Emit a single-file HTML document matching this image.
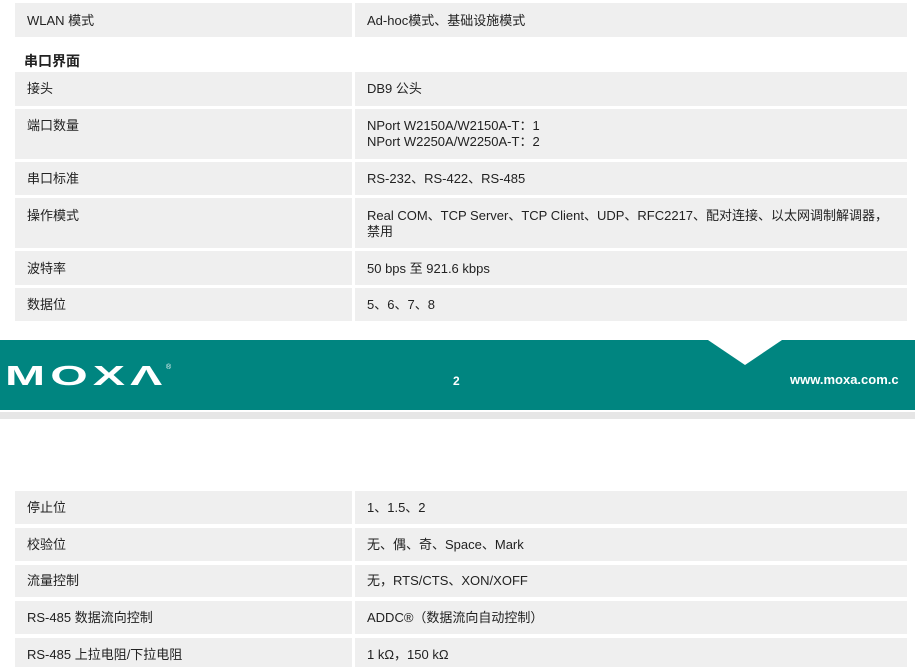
<html><head><style>
body{margin:0;width:915px;height:667px;overflow:hidden;background:#fff;position:relative;font-family:"Liberation Sans","Noto Sans CJK SC",sans-serif;font-size:13px;color:#222}
.c{position:absolute;background:#efefef}
.t{position:absolute;line-height:16px;margin-top:1px}
</style></head><body>
<div class="c" style="left:15px;top:3px;width:337px;height:34px"></div><div class="c" style="left:355px;top:3px;width:552px;height:34px"></div>
<div class="t" style="left:27px;top:12px">WLAN 模式</div><div class="t" style="left:367px;top:12px">Ad-hoc模式、基础设施模式</div>
<div class="t" style="left:24px;top:52px;font-weight:bold;font-size:14px">串口界面</div>

<div class="c" style="left:15px;top:72px;width:337px;height:34px"></div><div class="c" style="left:355px;top:72px;width:552px;height:34px"></div>
<div class="t" style="left:27px;top:80px">接头</div><div class="t" style="left:367px;top:80px">DB9 公头</div>

<div class="c" style="left:15px;top:109px;width:337px;height:50px"></div><div class="c" style="left:355px;top:109px;width:552px;height:50px"></div>
<div class="t" style="left:27px;top:117px">端口数量</div><div class="t" style="left:367px;top:117px">NPort W2150A/W2150A-T：1<br>NPort W2250A/W2250A-T：2</div>

<div class="c" style="left:15px;top:162px;width:337px;height:33px"></div><div class="c" style="left:355px;top:162px;width:552px;height:33px"></div>
<div class="t" style="left:27px;top:170px">串口标准</div><div class="t" style="left:367px;top:170px">RS-232、RS-422、RS-485</div>

<div class="c" style="left:15px;top:198px;width:337px;height:50px"></div><div class="c" style="left:355px;top:198px;width:552px;height:50px"></div>
<div class="t" style="left:27px;top:207px">操作模式</div><div class="t" style="left:367px;top:207px">Real COM、TCP Server、TCP Client、UDP、RFC2217、配对连接、以太网调制解调器，<br>禁用</div>

<div class="c" style="left:15px;top:251px;width:337px;height:34px"></div><div class="c" style="left:355px;top:251px;width:552px;height:34px"></div>
<div class="t" style="left:27px;top:260px">波特率</div><div class="t" style="left:367px;top:260px">50 bps 至 921.6 kbps</div>

<div class="c" style="left:15px;top:288px;width:337px;height:33px"></div><div class="c" style="left:355px;top:288px;width:552px;height:33px"></div>
<div class="t" style="left:27px;top:296px">数据位</div><div class="t" style="left:367px;top:296px">5、6、7、8</div>

<div style="position:absolute;left:0;top:340px;width:915px;height:70px;background:#008580"></div>
<svg style="position:absolute;left:0;top:338px" width="915" height="40"><polygon points="705,0 785,0 745,27" fill="#fff"/></svg>
<div style="position:absolute;left:0;top:412px;width:915px;height:7px;background:#e6e6e6"></div>
<div style="position:absolute;left:5px;top:361px;color:#fff;font-weight:bold;font-size:28px;letter-spacing:3px;line-height:30px;transform:scaleX(1.72);transform-origin:left;white-space:nowrap">MOXΛ</div>
<div style="position:absolute;left:166px;top:364px;color:#fff;font-size:7px">®</div>
<div style="position:absolute;left:453px;top:374px;color:#fff;font-weight:bold;font-size:12px">2</div>
<div style="position:absolute;left:790px;top:372px;color:#fff;font-weight:bold;font-size:13px;white-space:nowrap">www.moxa.com.c</div>

<div class="c" style="left:15px;top:491px;width:337px;height:33px"></div><div class="c" style="left:355px;top:491px;width:552px;height:33px"></div>
<div class="t" style="left:27px;top:499px">停止位</div><div class="t" style="left:367px;top:499px">1、1.5、2</div>
<div class="c" style="left:15px;top:528px;width:337px;height:33px"></div><div class="c" style="left:355px;top:528px;width:552px;height:33px"></div>
<div class="t" style="left:27px;top:536px">校验位</div><div class="t" style="left:367px;top:536px">无、偶、奇、Space、Mark</div>
<div class="c" style="left:15px;top:565px;width:337px;height:32px"></div><div class="c" style="left:355px;top:565px;width:552px;height:32px"></div>
<div class="t" style="left:27px;top:572px">流量控制</div><div class="t" style="left:367px;top:572px">无，RTS/CTS、XON/XOFF</div>
<div class="c" style="left:15px;top:601px;width:337px;height:33px"></div><div class="c" style="left:355px;top:601px;width:552px;height:33px"></div>
<div class="t" style="left:27px;top:609px">RS-485 数据流向控制</div><div class="t" style="left:367px;top:609px">ADDC®（数据流向自动控制）</div>
<div class="c" style="left:15px;top:638px;width:337px;height:29px"></div><div class="c" style="left:355px;top:638px;width:552px;height:29px"></div>
<div class="t" style="left:27px;top:646px">RS-485 上拉电阻/下拉电阻</div><div class="t" style="left:367px;top:646px">1 kΩ，150 kΩ</div>
</body></html>
